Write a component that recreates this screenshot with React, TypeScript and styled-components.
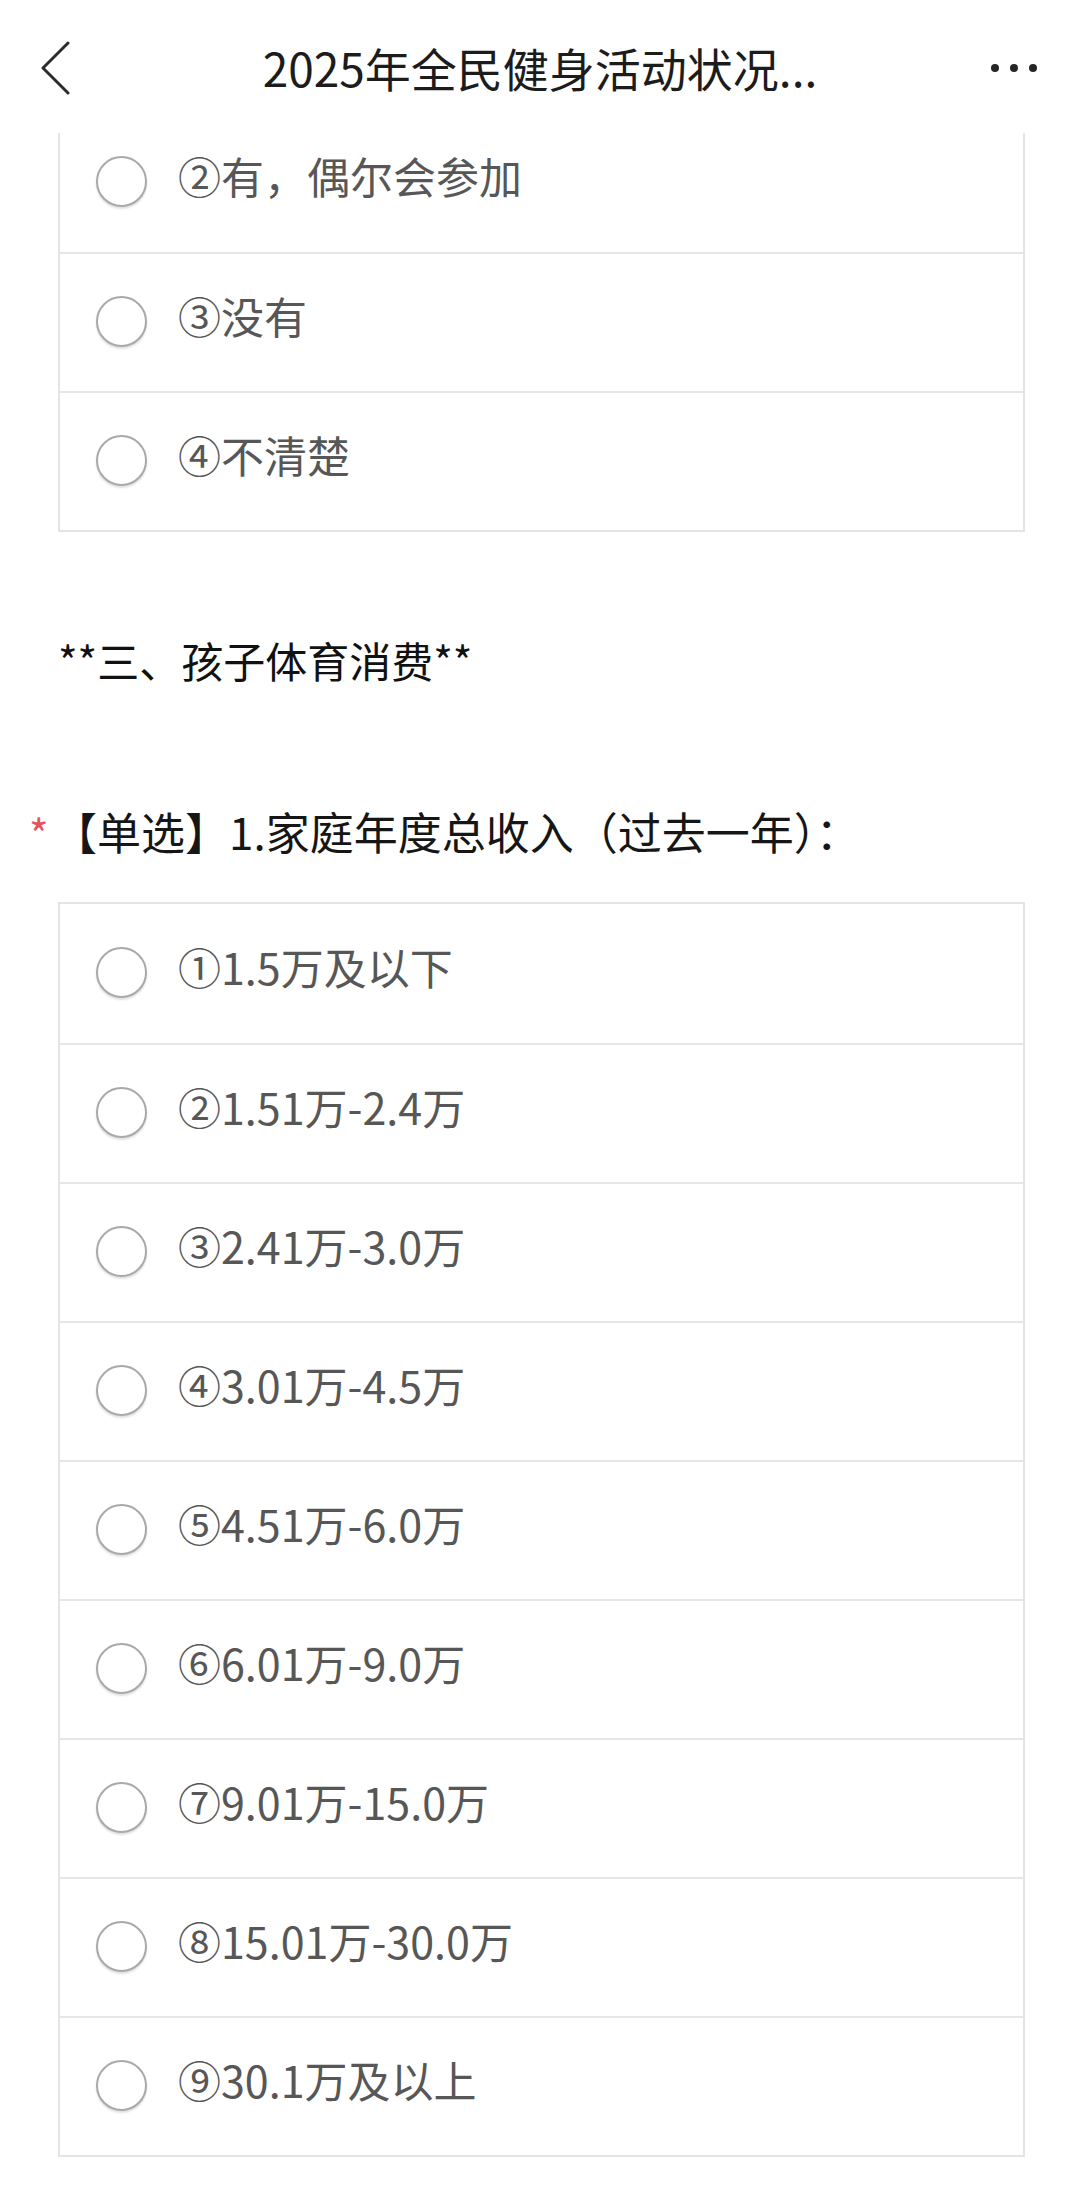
import React from 'react'
import styled, { createGlobalStyle } from 'styled-components'

type Question = {
    title: string
    options: string[]
}

const topOptions = ['②有，偶尔会参加', '③没有', '④不清楚']

const incomeQuestion: Question = {
    title: '【单选】1.家庭年度总收入（过去一年）：',
    options: [
        '①1.5万及以下',
        '②1.51万-2.4万',
        '③2.41万-3.0万',
        '④3.01万-4.5万',
        '⑤4.51万-6.0万',
        '⑥6.01万-9.0万',
        '⑦9.01万-15.0万',
        '⑧15.01万-30.0万',
        '⑨30.1万及以上',
    ],
}

const OptionList = ({ options }: { options: string[] }) => (
    <Card>
        {options.map((text) => (
            <OptionRow key={text}>
                <Radio />
                <OptionText>{text}</OptionText>
            </OptionRow>
        ))}
    </Card>
)

const App = () => {
    return (
        <Page>
            <GlobalStyle />
            <Header>
                <BackButton>
                    <svg width="30" height="54" viewBox="0 0 30 54" fill="none">
                        <polyline
                            points="27,2 2,27 27,52"
                            stroke="#2b2b2b"
                            strokeWidth="3"
                            strokeLinecap="round"
                            strokeLinejoin="round"
                        />
                    </svg>
                </BackButton>
                <Title>2025年全民健身活动状况...</Title>
                <MoreButton>
                    <Dot />
                    <Dot />
                    <Dot />
                </MoreButton>
            </Header>
            <Viewport>
                <Scrolled>
                    <OptionList options={topOptions} />
                    <SectionTitle>**三、孩子体育消费**</SectionTitle>
                    <QuestionTitle>
                        <Required>*</Required>
                        {incomeQuestion.title}
                    </QuestionTitle>
                    <OptionList options={incomeQuestion.options} />
                </Scrolled>
            </Viewport>
        </Page>
    )
}

const GlobalStyle = createGlobalStyle`
    html, body {
        margin: 0;
        padding: 0;
        background: #ffffff;
    }
    body {
        font-family: "Noto Sans CJK SC", "Noto Sans", sans-serif;
    }
    * {
        box-sizing: border-box;
    }
`

const Page = styled.div`
    width: 1080px;
    height: 2185px;
    background: #ffffff;
    display: flex;
    flex-direction: column;
    overflow: hidden;
`

const Header = styled.header`
    height: 133px;
    flex-shrink: 0;
    display: grid;
    grid-template-columns: 160px 1fr 160px;
    align-items: center;
    background: #ffffff;
    position: relative;
    z-index: 1;
`

const BackButton = styled.div`
    display: flex;
    align-items: center;
    padding-left: 41px;
    padding-top: 2px;
`

const Title = styled.div`
    text-align: center;
    font-size: 46px;
    line-height: 60px;
    color: #1c1c1c;
    white-space: nowrap;
`

const MoreButton = styled.div`
    display: flex;
    justify-content: flex-end;
    align-items: center;
    gap: 11px;
    padding-right: 43px;
    padding-top: 3px;
`

const Dot = styled.span`
    width: 8px;
    height: 8px;
    border-radius: 50%;
    background: #262626;
`

const Viewport = styled.div`
    flex: 1;
    overflow: hidden;
`

const Scrolled = styled.div`
    margin-top: -22px;
    display: flex;
    flex-direction: column;
`

const Card = styled.div`
    margin: 0 55px 0 58px;
    border: 2px solid #e4e4e4;
    background: #ffffff;
`

const OptionRow = styled.div`
    height: 139px;
    display: flex;
    align-items: center;
    padding-left: 36px;
    gap: 31px;
    & + & {
        border-top: 2px solid #e6e6e6;
    }
`

const Radio = styled.span`
    width: 51px;
    height: 51px;
    flex-shrink: 0;
    border-radius: 50%;
    border: 2px solid #a9a9a9;
    background: #ffffff;
    box-shadow: 0 2px 2px rgba(0, 0, 0, 0.12);
    margin-top: -2px;
`

const OptionText = styled.span`
    font-size: 43px;
    line-height: 56px;
    color: #575757;
    margin-top: -16px;
`

const SectionTitle = styled.div`
    margin: 98px 0 0 58px;
    font-size: 42px;
    line-height: 60px;
    color: #111111;
`

const QuestionTitle = styled.div`
    margin: 109px 0 39px 29px;
    font-size: 44px;
    line-height: 60px;
    color: #161616;
    white-space: nowrap;
    display: flex;
    align-items: center;
`

const Required = styled.span`
    color: #e5545e;
    font-size: 42px;
    line-height: 60px;
    width: 24px;
    margin-top: 4px;
`

export default App
